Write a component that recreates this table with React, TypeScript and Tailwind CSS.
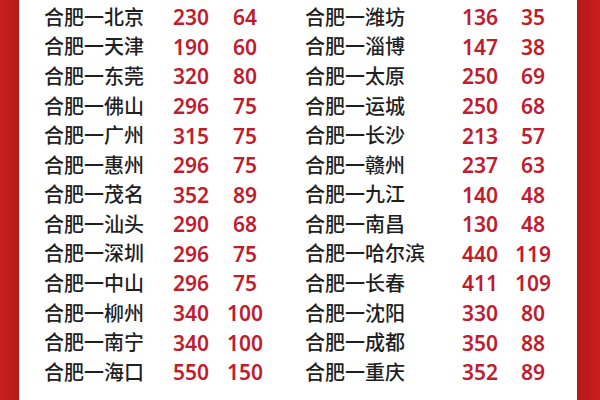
import React from "react";

const left: [string, string, string][] = [
  ["合肥一北京", "230", "64"],
  ["合肥一天津", "190", "60"],
  ["合肥一东莞", "320", "80"],
  ["合肥一佛山", "296", "75"],
  ["合肥一广州", "315", "75"],
  ["合肥一惠州", "296", "75"],
  ["合肥一茂名", "352", "89"],
  ["合肥一汕头", "290", "68"],
  ["合肥一深圳", "296", "75"],
  ["合肥一中山", "296", "75"],
  ["合肥一柳州", "340", "100"],
  ["合肥一南宁", "340", "100"],
  ["合肥一海口", "550", "150"],
];

const right: [string, string, string][] = [
  ["合肥一潍坊", "136", "35"],
  ["合肥一淄博", "147", "38"],
  ["合肥一太原", "250", "69"],
  ["合肥一运城", "250", "68"],
  ["合肥一长沙", "213", "57"],
  ["合肥一赣州", "237", "63"],
  ["合肥一九江", "140", "48"],
  ["合肥一南昌", "130", "48"],
  ["合肥一哈尔滨", "440", "119"],
  ["合肥一长春", "411", "109"],
  ["合肥一沈阳", "330", "80"],
  ["合肥一成都", "350", "88"],
  ["合肥一重庆", "352", "89"],
];

export default function App() {
  return (
    <div
      className="w-[600px] h-[400px] overflow-hidden flex bg-[#c41c1c]"
      style={{ fontFamily: '"Noto Sans", "Noto Sans CJK SC", sans-serif' }}
    >
      <div className="w-[19px] h-full bg-gradient-to-r from-[#c92020] to-[#b41717]" />
      <div className="w-[558px] h-full bg-white flex pt-[3px]">
        <div className="pl-[25px] w-[286px]">
          {left.map(([n, a, b]) => (
            <div key={n} className="grid grid-cols-[117px_60px_48px] h-[29.58px] items-center leading-none">
              <span className="text-[#1f1f1f] text-[20px] font-medium">{n}</span>
              <span className="text-center text-[#c01c2e] text-[21px] font-semibold">{a}</span>
              <span className="text-center text-[#c01c2e] text-[21px] font-semibold">{b}</span>
            </div>
          ))}
        </div>
        <div>
          {right.map(([n, a, b]) => (
            <div key={n} className="grid grid-cols-[145px_60px_46px] h-[29.58px] items-center leading-none">
              <span className="text-[#1f1f1f] text-[20px] font-medium">{n}</span>
              <span className="text-center text-[#c01c2e] text-[21px] font-semibold">{a}</span>
              <span className="text-center text-[#c01c2e] text-[21px] font-semibold">{b}</span>
            </div>
          ))}
        </div>
      </div>
      <div className="flex-1 h-full bg-gradient-to-r from-[#b81818] to-[#c81e1e]" />
    </div>
  );
}
